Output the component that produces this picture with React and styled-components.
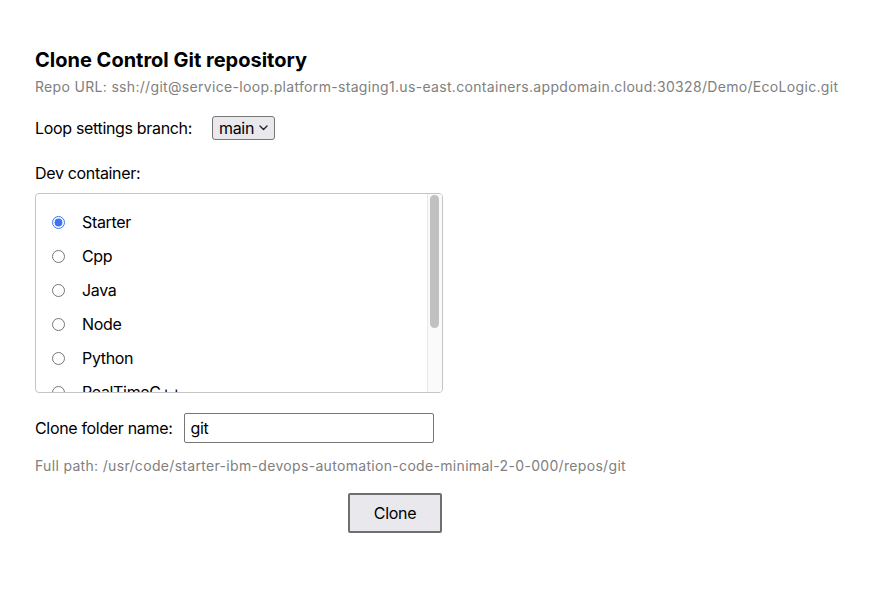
import React, { useState } from 'react';
import styled, { createGlobalStyle } from 'styled-components';

const GlobalStyle = createGlobalStyle`
  html, body {
    margin: 0;
    padding: 0;
    background: #fff;
  }

  body {
    font-family: Inter, 'Liberation Sans', Arial, sans-serif;
    color: #000;
    letter-spacing: -0.33px;
  }
`;

const containers = [
  'Starter',
  'Cpp',
  'Java',
  'Node',
  'Python',
  'RealTimeC++',
  'Go',
  'Dotnet'
];

const App = () => {
  const [container, setContainer] = useState('Starter');
  const [folder, setFolder] = useState('git');

  return (
    <>
      <GlobalStyle />
      <StyledMain>
        <h1>Clone Control Git repository</h1>
        <p className='muted'>
          Repo URL:
          ssh://git@service-loop.platform-staging1.us-east.containers.appdomain.cloud:30328/Demo/EcoLogic.git
        </p>

        <div className='branch-row'>
          <label>Loop settings branch:</label>
          <SelectBox>
            main
            <svg width='9' height='6' viewBox='0 0 9 6'>
              <path
                d='M1 1l3.5 3.5L8 1'
                fill='none'
                stroke='#222'
                strokeWidth='1.4'
                strokeLinecap='round'
                strokeLinejoin='round'
              />
            </svg>
          </SelectBox>
        </div>

        <p className='section-label'>Dev container:</p>

        <ContainerList>
          <div className='options'>
            {containers.map((name) => (
              <RadioRow key={name}>
                <input
                  type='radio'
                  name='container'
                  checked={container === name}
                  onChange={() => setContainer(name)}
                />
                <span>{name}</span>
              </RadioRow>
            ))}
          </div>
          <ScrollTrack>
            <div className='thumb' />
          </ScrollTrack>
        </ContainerList>

        <div className='folder-row'>
          <label>Clone folder name:</label>
          <TextInput
            value={folder}
            onChange={(e) => setFolder(e.target.value)}
          />
        </div>

        <p className='muted path'>
          Full path: /usr/code/starter-ibm-devops-automation-code-minimal-2-0-000/repos/
          {folder}
        </p>

        <div className='actions'>
          <CloneButton>Clone</CloneButton>
        </div>
      </StyledMain>
    </>
  );
};

const StyledMain = styled.main`
  padding: 48px 35px 0 35px;

  h1 {
    margin: 0;
    font-size: 20px;
    font-weight: 700;
    line-height: 24px;
    letter-spacing: 0;
  }

  .muted {
    margin: 6px 0 0 0;
    font-size: 14px;
    line-height: 18px;
    letter-spacing: 0.32px;
    color: #808080;
  }

  .branch-row {
    display: flex;
    align-items: center;
    margin-top: 20px;
    font-size: 16px;

    label {
      margin-right: 20px;
    }
  }

  .section-label {
    margin: 23px 0 0 0;
    font-size: 16px;
    line-height: 20px;
  }

  .folder-row {
    display: flex;
    align-items: center;
    margin-top: 20px;
    font-size: 16px;

    label {
      margin-right: 12px;
    }
  }

  .path {
    margin-top: 14px;
  }

  .actions {
    display: flex;
    justify-content: center;
    width: 720px;
    margin-top: 18px;
  }
`;

const SelectBox = styled.div`
  display: flex;
  align-items: center;
  gap: 5px;
  height: 24px;
  box-sizing: border-box;
  padding: 0 6px 0 6px;
  border: 1px solid #767676;
  border-radius: 3px;
  background: #e9e9ed;
  font-size: 16px;
`;

const ContainerList = styled.div`
  display: flex;
  width: 408px;
  height: 200px;
  box-sizing: border-box;
  margin-top: 10px;
  border: 1px solid #c4c4c4;
  border-radius: 4px;
  overflow: hidden;

  .options {
    flex: 1;
    padding: 11px 0;
    overflow: hidden;
  }
`;

const ScrollTrack = styled.div`
  width: 15px;
  flex-shrink: 0;
  box-sizing: border-box;
  padding: 1px 3px 0 2px;
  background: #fafafa;
  border-left: 1px solid #e8e8e8;

  .thumb {
    height: 133px;
    border-radius: 5px;
    background: #c1c1c1;
  }
`;

const RadioRow = styled.label`
  display: flex;
  align-items: center;
  height: 34px;
  padding-left: 16px;
  font-size: 16px;

  input {
    width: 13px;
    height: 13px;
    margin: 0 17px 0 0;
    accent-color: #3b73f0;
  }
`;

const TextInput = styled.input`
  width: 250px;
  height: 30px;
  box-sizing: border-box;
  padding: 0 5px;
  border: 1px solid #767676;
  border-radius: 2px;
  font-family: inherit;
  font-size: 16px;
  letter-spacing: inherit;
  color: #000;
  outline: none;
`;

const CloneButton = styled.button`
  width: 94px;
  height: 40px;
  border: 2px solid #6f6f6f;
  border-radius: 2px;
  background: #e9e9ed;
  font-family: inherit;
  font-size: 16px;
  letter-spacing: inherit;
  color: #000;
`;

export default App;
